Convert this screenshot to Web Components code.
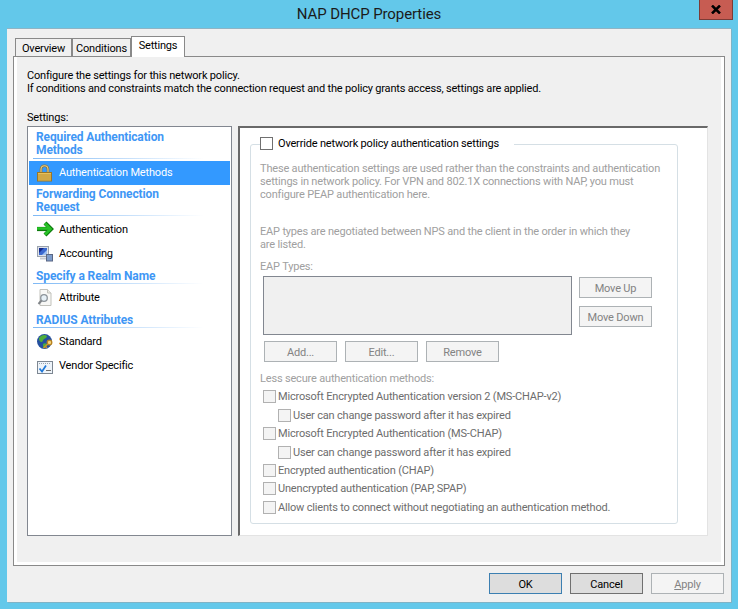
<!DOCTYPE html>
<html>
<head>
<meta charset="utf-8">
<title>NAP DHCP Properties</title>
<style>
html, body { margin: 0; padding: 0; background: #63c8ea; }
body { width: 738px; height: 609px; overflow: hidden; font: 11px/13px Roboto, "Liberation Sans", sans-serif; letter-spacing: -.18px; color: #000; }
</style>
</head>
<body>
<nap-dialog caption="NAP DHCP Properties">
  <tab-strip slot="tabs">
    <tab-item style="width:57px">Overview</tab-item>
    <tab-item style="width:59px">Conditions</tab-item>
    <tab-item selected style="width:54px">Settings</tab-item>
  </tab-strip>

  <div slot="intro">Configure the settings for this network policy.<br>If conditions and constraints match the connection request and the policy grants access, settings are applied.</div>
  <div slot="caption">Settings:</div>

  <nav-list slot="nav">
    <nav-header class="first">Required Authentication<br>Methods</nav-header>
    <nav-item icon="lock" selected>Authentication Methods</nav-item>
    <nav-header>Forwarding Connection<br>Request</nav-header>
    <nav-item icon="arrow">Authentication</nav-item>
    <nav-item icon="monitor">Accounting</nav-item>
    <nav-header class="one">Specify a Realm Name</nav-header>
    <nav-item icon="page">Attribute</nav-item>
    <nav-header class="one">RADIUS Attributes</nav-header>
    <nav-item icon="globe">Standard</nav-item>
    <nav-item icon="check">Vendor Specific</nav-item>
  </nav-list>

  <auth-pane slot="pane"></auth-pane>

  <win-button slot="footer" kind="default">OK</win-button>
  <win-button slot="footer">Cancel</win-button>
  <win-button slot="footer" kind="disabled"><u>A</u>pply</win-button>
</nap-dialog>

<script>
// Small helper: every component is a template string attached to an open root.
function makeTemplate(html) {
    let t = document.createElement("template");
    t.innerHTML = html;
    return t;
}

class NapDialog extends HTMLElement {
    constructor() {
        super();
        this.attachShadow({mode: "open"});
        this.shadowRoot.append(NapDialog.template.content.cloneNode(true));
        this.shadowRoot.querySelector("#title").textContent = this.getAttribute("caption");
    }
}
NapDialog.template = makeTemplate(`
<style>
:host { display: flex; flex-direction: column; width: 738px; height: 609px; box-sizing: border-box; padding: 0 7px 7px; background: #63c8ea; }
#bar { display: flex; height: 28px; flex: none; }
#title { flex: 1; text-align: center; font-size: 15px; letter-spacing: -.1px; line-height: 28px; color: #1b1b1b; padding-left: 32px; }
#close { flex: none; width: 34px; height: 20px; margin-right: -2px; box-sizing: border-box; background: #c75c52; border: 1px solid #7c3b36; border-top: 0; display: flex; align-items: center; justify-content: center; }
#client { flex: 1; background: #f0f0f0; padding: 8px 6px 0; display: flex; flex-direction: column; border-top: 1px solid #8fb4c4; box-shadow: 1px 1px 0 #7fb3c6; box-sizing: border-box; }
#panel { height: 510px; box-sizing: border-box; border: 1px solid #898989; background: #fff; flex: none; }
#inner { height: calc(100% - 3px); box-sizing: border-box; margin: 0 3px 3px; padding: 12px 0 0 10px; background: #f0f0f0; }
::slotted([slot="intro"]) { height: 26px; }
::slotted([slot="caption"]) { margin: 16px 0 2px; }
#grid { display: grid; grid-template-columns: 205px 470px; column-gap: 6px; height: 410px; }
#footer { display: flex; justify-content: flex-end; gap: 8px; padding: 7px 1px 0 0; }
</style>
<div id="bar">
  <div id="title"></div>
  <div id="close"><svg width="10" height="9" viewBox="0 0 10 9"><path d="M1 .5 L9 8.500 M9 .5 L1 8.500" stroke="#000" stroke-width="2.500" fill="none"/></svg></div>
</div>
<div id="client">
  <slot name="tabs"></slot>
  <div id="panel"><div id="inner">
    <slot name="intro"></slot>
    <slot name="caption"></slot>
    <div id="grid"><slot name="nav"></slot><slot name="pane"></slot></div>
  </div></div>
  <div id="footer"><slot name="footer"></slot></div>
</div>`);

class TabStrip extends HTMLElement {
    constructor() {
        super();
        this.attachShadow({mode: "open"}).innerHTML = `
<style>
:host { display: flex; align-items: flex-end; height: 20px; margin-bottom: -1px; padding-left: 2px; position: relative; z-index: 1; flex: none; }
</style><slot></slot>`;
    }
}

class TabItem extends HTMLElement {
    constructor() {
        super();
        this.attachShadow({mode: "open"}).innerHTML = `
<style>
:host { display: block; box-sizing: border-box; height: 18px; padding-top: 3px; text-align: center; border: 1px solid #898989; border-bottom: 0; background: #f0f0f0; margin-bottom: 1px; }
:host([selected]) { height: 21px; padding-top: 2px; background: #fff; margin: 0; }
</style><slot></slot>`;
    }
}

class NavList extends HTMLElement {
    constructor() {
        super();
        this.attachShadow({mode: "open"}).innerHTML = `
<style>
:host { display: block; box-sizing: border-box; height: 410px; background: #fff; border: 1px solid #828790; padding: 0 1px; }
</style><slot></slot>`;
    }
}

class NavHeader extends HTMLElement {
    constructor() {
        super();
        this.attachShadow({mode: "open"}).innerHTML = `
<style>
:host { display: block; box-sizing: border-box; margin: 3px 0 1px 4px; width: 170px; padding: 0 0 1px 3px; color: #3f97f5; font-weight: 700; font-size: 12px; letter-spacing: -.12px; line-height: 13px; border-bottom: 1px solid; border-image: linear-gradient(to right, #7db8f5, #fff) 1; }
:host(.first) { margin-top: 4px; margin-bottom: 2px; }
:host(.one) { padding-bottom: 0; margin-top: 5px; }
</style><slot></slot>`;
    }
}

const ICONS = {
    lock: `<path d="M4 8V4.500C4 2 5.500 .8 7.500 .8S11 2 11 4.500V8" fill="none" stroke="#8d7434" stroke-width="2.600"/>
           <path d="M4 8V4.500C4 2 5.500 .8 7.500 .8S11 2 11 4.500V8" fill="none" stroke="#e6cf8c" stroke-width="1.100"/>
           <rect x=".5" y="7.500" width="14" height="8.500" fill="#e8c15a" stroke="#97762a"/>
           <path d="M1 10h13M1 12h13M1 14h13" stroke="#b98f33"/>`,
    arrow: `<path d="M0 8H12" stroke="#0d7a0d" stroke-width="4.200" fill="none"/>
            <path d="M8 2 14 8 8 14" stroke="#0d7a0d" stroke-width="4.200" fill="none"/>
            <path d="M0 7.500H12" stroke="#27c227" stroke-width="2.600" fill="none"/>
            <path d="M8 2.500 13.500 8 8 13.500" stroke="#27c227" stroke-width="2.600" fill="none"/>`,
    monitor: `<rect x=".5" y="1.500" width="11" height="10" fill="#dfe3ea" stroke="#9aa2ad"/>
           <rect x="2" y="3" width="8" height="7" fill="#3a68cf"/>
           <path d="M2 3H7L2 8Z" fill="#14298a"/>
           <path d="M10 10H5L10 5Z" fill="#9cc0f2"/>
           <path d="M3 12.500H9V14.500H3Z" fill="#c6cad1"/>
           <rect x="9.500" y="9.500" width="6" height="6.500" fill="#7d9ccb" stroke="#5a6784"/>`,
    page: `<path d="M3 .5H10.500L14 4V16.500H3Z" fill="#f8f8f6" stroke="#c2c2bc"/>
           <path d="M10.500 .5V4H14" fill="#e9e9e4" stroke="#c2c2bc"/>
           <circle cx="7" cy="9" r="3.300" fill="#e6f0f6" stroke="#8d949a" stroke-width="1.300"/>
           <path d="M4.500 11.500 1.500 15" stroke="#808488" stroke-width="2"/>`,
    globe: `<circle cx="7.500" cy="8.500" r="7.500" fill="#24509f"/>
           <path d="M2 5C4 2 8 1 10 3 9.500 6 6.500 5 5.500 8.500 4 10 1.500 8 2 5ZM6 11c2-1.500 3-.5 4 .5L7.500 15.500C6 15 6 13 6 11Z" fill="#4fae3a"/>
           <circle cx="12.500" cy="9.500" r="2.300" fill="#f2d27a" stroke="#b8821e" stroke-width="1.300"/>
           <path d="M10.800 11 6.500 15M8.500 13.500l1.500 1.500" stroke="#c9922a" stroke-width="1.600"/>`,
    check: `<rect x=".5" y="4.500" width="15" height="12" fill="#eef4fa" stroke="#7d8792"/>
           <path d="M2 6.500h1M4 6.500h1M6 6.500h1M8 6.500h1M10 6.500h1M12 6.500h1" stroke="#9aa3ad"/>
           <path d="M2.500 11.500 5 14.500 9 8.500" fill="none" stroke="#1f78d8" stroke-width="1.700"/>
           <path d="M9 13.500h5" stroke="#6f6f6f"/>`
};

class NavItem extends HTMLElement {
    constructor() {
        super();
        this.attachShadow({mode: "open"}).innerHTML = `
<style>
:host { display: flex; align-items: center; height: 24px; box-sizing: border-box; padding-left: 8px; }
:host([selected]) { background: #3399ff; color: #fff; }
:host([selected]) span { margin-bottom: 2px; }
svg { width: 16px; height: 16px; flex: none; margin-right: 6px; overflow: visible; }
</style>
<svg viewBox="0 0 16 16">${ICONS[this.getAttribute("icon")]}</svg><span><slot></slot></span>`;
    }
}

class WinButton extends HTMLElement {
    constructor() {
        super();
        this.attachShadow({mode: "open"}).innerHTML = `
<style>
:host { display: flex; align-items: center; justify-content: center; box-sizing: border-box; width: 73px; height: 21px; padding-top: 1px; border: 1px solid #707070; background: #dddddd; color: #000; flex: none; }
:host([kind="default"]) { border-color: #3c7fb1; }
:host([kind="disabled"]) { border-color: #adb2b5; background: #f4f4f4; color: #838383; }
</style><slot></slot>`;
    }
}

class ChkBox extends HTMLElement {
    constructor() {
        super();
        this.attachShadow({mode: "open"}).innerHTML = `
<style>
:host { display: flex; align-items: center; color: #6d6d6d; }
:host([indent]) { padding-left: 15px; }
:host([enabled]) { color: #000; }
i { display: block; box-sizing: border-box; width: 13px; height: 13px; border: 1px solid #b1b1b1; background: #f4f4f4; margin-right: 2px; flex: none; }
:host([enabled]) i { border-color: #707070; background: #fff; margin-right: 5px; }
</style><i></i><slot></slot>`;
    }
}

class AuthPane extends HTMLElement {
    constructor() {
        super();
        this.attachShadow({mode: "open"}).innerHTML = `
<style>
:host { display: block; box-sizing: border-box; height: 410px; background: #fff; border-style: solid; border-width: 2px 1px 1px 2px; border-color: #696969 #e3e3e3 #e3e3e3 #696969; padding: 0 29px 0 10px; }
fieldset { margin: 9px 0 0; padding: 0 10px 0 9px; height: 387px; box-sizing: border-box; border: 1px solid #d5dfe5; border-radius: 3px; color: #a0a0a0; }
legend { padding: 0 15px 0 0; margin-left: 0; height: 14px; }
p { margin: 0; }
#what { margin-top: 11px; }
#eap { margin-top: 24px; }
#types { margin-top: 9px; }
#row { display: flex; gap: 7px; margin: 3px 0 0 3px; }
#box { box-sizing: border-box; width: 309px; height: 59px; background: #f0f0f0; border: 1px solid #828790; }
#side { display: flex; flex-direction: column; gap: 8px; padding-top: 1px; }
#actions { display: flex; gap: 8px; margin: 6px 0 0 4px; }
#less { margin-top: 10px; }
#checks { display: grid; grid-template-rows: 19px 18px 19px 18px 18px 19px 13px; align-items: start; margin: 5px 0 0 3px; }
</style>
<fieldset>
  <legend><chk-box enabled>Override network policy authentication settings</chk-box></legend>
  <p id="what">These authentication settings are used rather than the constraints and authentication<br>settings in network policy. For VPN and 802.1X connections with NAP, you must<br>configure PEAP authentication here.</p>
  <p id="eap">EAP types are negotiated between NPS and the client in the order in which they<br>are listed.</p>
  <p id="types">EAP Types:</p>
  <div id="row">
    <div id="box"></div>
    <div id="side"><win-button kind="disabled">Move Up</win-button><win-button kind="disabled">Move Down</win-button></div>
  </div>
  <div id="actions"><win-button kind="disabled">Add...</win-button><win-button kind="disabled">Edit...</win-button><win-button kind="disabled">Remove</win-button></div>
  <p id="less">Less secure authentication methods:</p>
  <div id="checks">
    <chk-box>Microsoft Encrypted Authentication version 2 (MS-CHAP-v2)</chk-box>
    <chk-box indent>User can change password after it has expired</chk-box>
    <chk-box>Microsoft Encrypted Authentication (MS-CHAP)</chk-box>
    <chk-box indent>User can change password after it has expired</chk-box>
    <chk-box>Encrypted authentication (CHAP)</chk-box>
    <chk-box>Unencrypted authentication (PAP, SPAP)</chk-box>
    <chk-box>Allow clients to connect without negotiating an authentication method.</chk-box>
  </div>
</fieldset>`;
    }
}

customElements.define("win-button", WinButton);
customElements.define("chk-box", ChkBox);
customElements.define("tab-strip", TabStrip);
customElements.define("tab-item", TabItem);
customElements.define("nav-list", NavList);
customElements.define("nav-header", NavHeader);
customElements.define("nav-item", NavItem);
customElements.define("auth-pane", AuthPane);
customElements.define("nap-dialog", NapDialog);
</script>
</body>
</html>
